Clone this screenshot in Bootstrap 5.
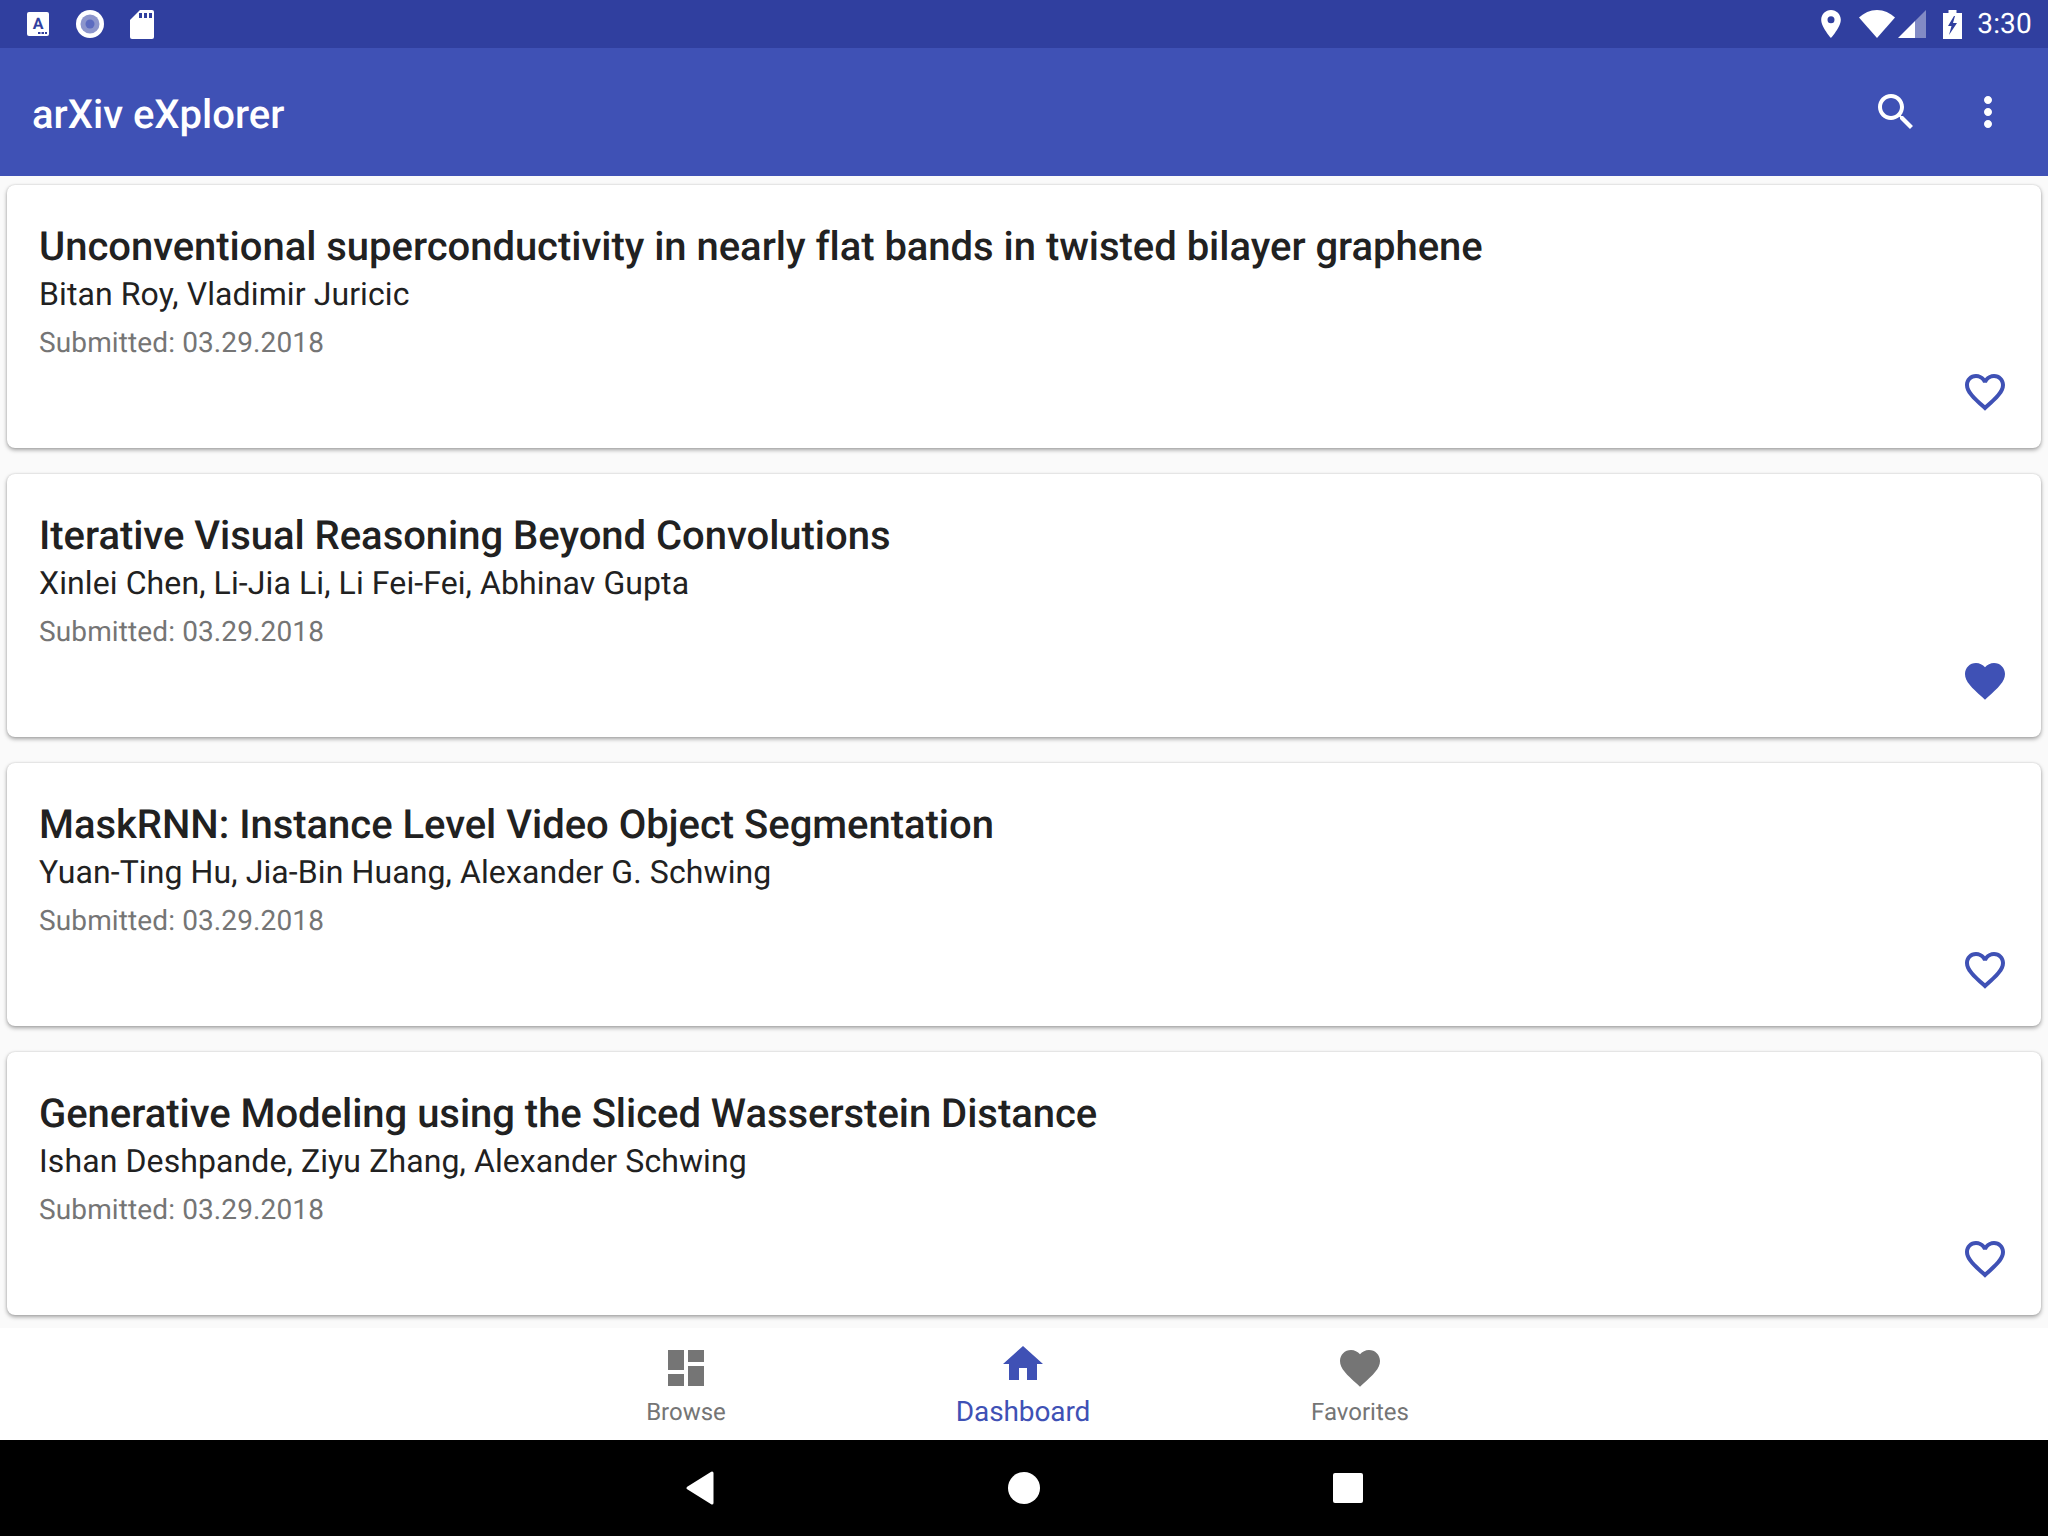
<!DOCTYPE html>
<html lang="en">
    <head>
        <meta charset="UTF-8">
        <title>arXiv eXplorer</title>
        <link href="https://cdn.jsdelivr.net/npm/bootstrap@5.3.0/dist/css/bootstrap.min.css" rel="stylesheet">
        <style>
            body { height: 1536px; overflow: hidden; background: #fafafa; font-family: Roboto, "Liberation Sans", sans-serif; color: #212121; text-rendering: geometricPrecision; }
            .status-strip { height: 48px; background: #303f9f; color: #fff; padding: 0 16px 0 27px; }
            .status-strip svg { fill: #fff; display: block; }
            .status-time { font-size: 28px; line-height: 48px; margin-left: 15px; letter-spacing: .2px; }
            .left-icons { gap: 26.500px; }
            .ic-wifi { margin-left: 18px; }
            .ic-signal { margin-left: 3px; }
            .ic-batt { margin-left: 17px; }
            .app-bar { height: 128px; background: #3f51b5; color: #fff; padding: 0 36px 0 32px; }
            .app-title { font-size: 40px; font-weight: 500; margin: 0; line-height: 1; padding-top: 6px; }
            .app-bar svg { width: 48px; height: 48px; fill: #fff; display: block; }
            .app-actions { gap: 44px; }
            .paper-list { height: 1152px; overflow: hidden; padding: 9px 7px 0; }
            .paper { height: 263px; margin-bottom: 26px; border: 0; border-radius: 8px; box-shadow: 0 2px 4px rgba(0,0,0,.35), 0 0 2px rgba(0,0,0,.15); padding: 38px 32px 0; position: relative; }
            .paper-title { font-size: 40px; font-weight: 500; line-height: 48px; margin: 0; color: #212121; letter-spacing: -.03px; }
            .paper-authors { font-size: 32px; line-height: 48px; margin-top: -1px; color: #212121; letter-spacing: .1px; }
            .paper-date { font-size: 28px; line-height: 48px; margin-top: 1px; color: #757575; letter-spacing: .12px; }
            .fav { position: absolute; right: 32px; bottom: 32px; width: 48px; height: 48px; fill: #3f51b5; }
            .tab-strip { height: 112px; background: #fff; padding-right: 2px; }
            .tab-item { width: 337px; color: #757575; font-size: 24px; line-height: 32px; padding-top: 16px; }
            .tab-item svg { width: 48px; height: 48px; fill: #757575; display: block; }
            .tab-item.is-active { color: #3f51b5; font-size: 28px; padding-top: 12px; letter-spacing: -.1px; }
            .tab-item.is-active svg { fill: #3f51b5; }
            .tab-label { margin-top: 4px; }
            .is-active .tab-label { margin-top: 8px; }
            .sys-strip { height: 96px; background: #000; gap: 264px; }
            .sys-strip svg { width: 60px; height: 60px; fill: #fff; display: block; }
        </style>
    </head>
    <body>
        <div class="status-strip d-flex align-items-center">
            <div class="d-flex align-items-center left-icons">
                <svg width="22" height="24" viewBox="0 0 22 24"><rect width="22" height="24" rx="2"/><text x="11" y="17" text-anchor="middle" font-family="Roboto" font-weight="700" font-size="16" fill="#303f9f">A</text><path d="M11 20h2.500v2H11zM14.500 20H17v2h-2.500zM18 20h2v2h-2z" fill="#303f9f"/></svg>
                <svg width="28" height="28" viewBox="0 0 28 28"><circle cx="14" cy="14" r="14"/><circle cx="14" cy="14" r="9.500" fill="#8c95cc"/><circle cx="14" cy="14" r="4.500" fill="#5c6bc0"/></svg>
                <svg width="24" height="29" viewBox="0 0 24 29"><path d="M10 0h12a2 2 0 0 1 2 2v25a2 2 0 0 1-2 2H2a2 2 0 0 1-2-2V10z"/><path d="M9 3h3v5H9zM14 3h3v5h-3zM19 3h3v5h-3z" fill="#303f9f"/></svg>
            </div>
            <div class="d-flex align-items-center ms-auto">
                <svg width="20" height="28" viewBox="5 2 14 20"><path d="M12 2C8.130 2 5 5.130 5 9c0 5.250 7 13 7 13s7-7.750 7-13c0-3.870-3.130-7-7-7zm0 9.500a2.500 2.500 0 0 1 0-5 2.500 2.500 0 0 1 0 5z"/></svg>
                <svg class="ic-wifi" width="36" height="28" viewBox="0 0 36 28"><path d="M18 28 0 7.500C5 3 11 0 18 0s13 3 18 7.500z"/></svg>
                <svg class="ic-signal" width="28" height="28" viewBox="0 0 28 28"><path d="M17 11 28 0v28H17z" opacity=".4"/><path d="M17 11v17H0z"/></svg>
                <svg class="ic-batt" width="19" height="29" viewBox="0 0 19 29"><path d="M5.500 0h8v3H19v26H0V3h5.500z"/><path d="M11 6 5 16h3.500L6 25l8-12h-4l2-7z" fill="#303f9f"/></svg>
                <span class="status-time">3:30</span>
            </div>
        </div>

        <div class="app-bar d-flex align-items-center justify-content-between">
            <h1 class="app-title">arXiv eXplorer</h1>
            <div class="d-flex app-actions">
                <svg viewBox="0 0 24 24"><path d="M15.500 14h-.79l-.28-.27C15.410 12.590 16 11.110 16 9.500 16 5.910 13.090 3 9.500 3S3 5.910 3 9.500 5.910 16 9.500 16c1.610 0 3.090-.59 4.230-1.570l.27.28v.79l5 4.990L20.490 19l-4.990-5zm-6 0C7.010 14 5 11.990 5 9.500S7.010 5 9.500 5 14 7.010 14 9.500 11.990 14 9.500 14z"/></svg>
                <svg viewBox="0 0 24 24"><path d="M12 8c1.100 0 2-.9 2-2s-.9-2-2-2-2 .9-2 2 .9 2 2 2zm0 2c-1.100 0-2 .9-2 2s.9 2 2 2 2-.9 2-2-.9-2-2-2zm0 6c-1.100 0-2 .9-2 2s.9 2 2 2 2-.9 2-2-.9-2-2-2z"/></svg>
            </div>
        </div>

        <div class="paper-list">
            <div class="card paper">
                <h2 class="paper-title">Unconventional superconductivity in nearly flat bands in twisted bilayer graphene</h2>
                <div class="paper-authors">Bitan Roy, Vladimir Juricic</div>
                <div class="paper-date">Submitted: 03.29.2018</div>
                <svg class="fav" viewBox="0 0 24 24"><path d="M16.500 3c-1.740 0-3.410.81-4.500 2.090C10.910 3.810 9.240 3 7.500 3 4.420 3 2 5.420 2 8.500c0 3.780 3.400 6.860 8.550 11.540L12 21.350l1.450-1.320C18.600 15.360 22 12.280 22 8.500 22 5.420 19.580 3 16.500 3zm-4.400 15.550l-.1.1-.1-.1C7.140 14.240 4 11.390 4 8.500 4 6.500 5.500 5 7.500 5c1.540 0 3.040.99 3.570 2.360h1.870C13.460 5.990 14.960 5 16.500 5c2 0 3.500 1.500 3.500 3.500 0 2.890-3.140 5.740-7.900 10.050z"/></svg>
            </div>
            <div class="card paper">
                <h2 class="paper-title">Iterative Visual Reasoning Beyond Convolutions</h2>
                <div class="paper-authors">Xinlei Chen, Li-Jia Li, Li Fei-Fei, Abhinav Gupta</div>
                <div class="paper-date">Submitted: 03.29.2018</div>
                <svg class="fav" viewBox="0 0 24 24"><path d="M12 21.350l-1.450-1.320C5.400 15.360 2 12.280 2 8.500 2 5.420 4.420 3 7.500 3c1.740 0 3.410.81 4.500 2.090C13.090 3.810 14.760 3 16.500 3 19.580 3 22 5.420 22 8.500c0 3.780-3.400 6.860-8.550 11.540L12 21.350z"/></svg>
            </div>
            <div class="card paper">
                <h2 class="paper-title">MaskRNN: Instance Level Video Object Segmentation</h2>
                <div class="paper-authors">Yuan-Ting Hu, Jia-Bin Huang, Alexander G. Schwing</div>
                <div class="paper-date">Submitted: 03.29.2018</div>
                <svg class="fav" viewBox="0 0 24 24"><path d="M16.500 3c-1.740 0-3.410.81-4.500 2.090C10.910 3.810 9.240 3 7.500 3 4.420 3 2 5.420 2 8.500c0 3.780 3.400 6.860 8.550 11.540L12 21.350l1.450-1.320C18.600 15.360 22 12.280 22 8.500 22 5.420 19.580 3 16.500 3zm-4.400 15.550l-.1.1-.1-.1C7.140 14.240 4 11.390 4 8.500 4 6.500 5.500 5 7.500 5c1.540 0 3.040.99 3.570 2.360h1.870C13.460 5.990 14.960 5 16.500 5c2 0 3.500 1.500 3.500 3.500 0 2.890-3.140 5.740-7.900 10.050z"/></svg>
            </div>
            <div class="card paper">
                <h2 class="paper-title">Generative Modeling using the Sliced Wasserstein Distance</h2>
                <div class="paper-authors">Ishan Deshpande, Ziyu Zhang, Alexander Schwing</div>
                <div class="paper-date">Submitted: 03.29.2018</div>
                <svg class="fav" viewBox="0 0 24 24"><path d="M16.500 3c-1.740 0-3.410.81-4.500 2.090C10.910 3.810 9.240 3 7.500 3 4.420 3 2 5.420 2 8.500c0 3.780 3.400 6.860 8.550 11.540L12 21.350l1.450-1.320C18.600 15.360 22 12.280 22 8.500 22 5.420 19.580 3 16.500 3zm-4.400 15.550l-.1.1-.1-.1C7.140 14.240 4 11.390 4 8.500 4 6.500 5.500 5 7.500 5c1.540 0 3.040.99 3.570 2.360h1.870C13.460 5.990 14.960 5 16.500 5c2 0 3.500 1.500 3.500 3.500 0 2.890-3.140 5.740-7.900 10.050z"/></svg>
            </div>
        </div>

        <div class="tab-strip d-flex justify-content-center">
            <div class="tab-item d-flex flex-column align-items-center">
                <svg viewBox="0 0 24 24"><path d="M3 13h8V3H3v10zm0 8h8v-6H3v6zm10 0h8V11h-8v10zm0-18v6h8V3h-8z"/></svg>
                <span class="tab-label">Browse</span>
            </div>
            <div class="tab-item is-active d-flex flex-column align-items-center">
                <svg viewBox="0 0 24 24"><path d="M10 20v-6h4v6h5v-8h3L12 3 2 12h3v8z"/></svg>
                <span class="tab-label">Dashboard</span>
            </div>
            <div class="tab-item d-flex flex-column align-items-center">
                <svg viewBox="0 0 24 24"><path d="M12 21.350l-1.450-1.320C5.400 15.360 2 12.280 2 8.500 2 5.420 4.420 3 7.500 3c1.740 0 3.410.81 4.500 2.090C13.090 3.810 14.760 3 16.500 3 19.580 3 22 5.420 22 8.500c0 3.780-3.400 6.860-8.550 11.540L12 21.350z"/></svg>
                <span class="tab-label">Favorites</span>
            </div>
        </div>

        <div class="sys-strip d-flex align-items-center justify-content-center">
            <svg viewBox="0 0 60 60"><path d="M18 30 42 15v30z" stroke="#fff" stroke-width="3" stroke-linejoin="round"/></svg>
            <svg viewBox="0 0 60 60"><circle cx="30" cy="30" r="16"/></svg>
            <svg viewBox="0 0 60 60"><rect x="15" y="15" width="30" height="30" rx="2"/></svg>
        </div>
    </body>
</html>
